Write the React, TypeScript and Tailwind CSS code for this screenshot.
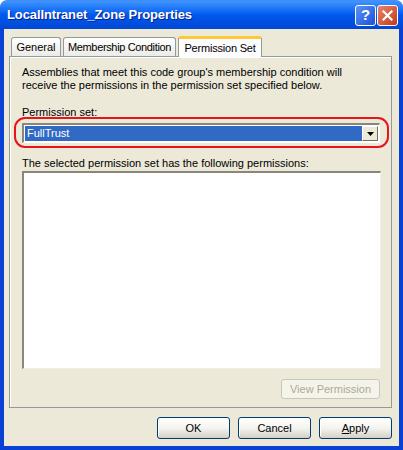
import React from 'react';

const font = { fontFamily: '"Liberation Sans", Arial, sans-serif' };

function XpButton({ children, disabled }: { children: React.ReactNode; disabled?: boolean }) {
  if (disabled) {
    return (
      <div className="w-[99px] h-[20px] flex items-center justify-center rounded-[3px] border border-[#C9C7BA] bg-[#F5F4EA] text-[11px] text-[#ACA899]">
        {children}
      </div>
    );
  }
  return (
    <div className="w-[73px] h-[22px] flex items-center justify-center rounded-[3px] border border-[#003C74] bg-gradient-to-b from-[#FFFFFF] via-[#F4F4F0] to-[#D6D0C5] text-[11px] text-black shadow-[inset_0_-1px_0_#D6D0C5,inset_1px_0_0_#FFFFFF]">
      {children}
    </div>
  );
}

export default function App() {
  return (
    <div className="w-[403px] h-[450px] bg-white flex flex-col" style={font}>
      {/* title bar */}
      <div className="h-[29px] rounded-t-[7px] bg-gradient-to-b from-[#3D95FF] via-[#0058EE] to-[#0247D3] flex items-center pl-[7px] pr-[5px] border-t border-[#4A8CF7]">
        <span className="text-white font-bold text-[13px] tracking-[-0.1px] [text-shadow:1px_1px_0_#0A1E8C]">
          LocalIntranet_Zone Properties
        </span>
        <div className="ml-auto flex gap-[1px]">
          <div className="w-[21px] h-[21px] rounded-[3px] border border-white bg-gradient-to-br from-[#5C93F5] to-[#1C4FD9] flex items-center justify-center text-white font-bold text-[15px]">
            ?
          </div>
          <div className="w-[21px] h-[21px] rounded-[3px] border border-white bg-gradient-to-br from-[#E8836A] to-[#C2371A] flex items-center justify-center">
            <svg width="11" height="11" viewBox="0 0 11 11">
              <path d="M1.5 1.5 L9.5 9.5 M9.5 1.5 L1.5 9.5" stroke="white" strokeWidth="2.2" strokeLinecap="square" />
            </svg>
          </div>
        </div>
      </div>

      {/* body */}
      <div className="flex-1 flex flex-col bg-[#ECE9D8] border-x-4 border-b-4 border-[#0841D4] pl-[5px] pr-[7px] text-[11px] text-black">
        {/* tabs */}
        <div className="flex items-end h-[27px] pl-[2px] gap-[2px]">
          <div className="w-[50px] h-[19px] flex items-center justify-center border border-b-0 border-[#919B9C] rounded-t-[3px] bg-gradient-to-b from-white to-[#ECEBE6]">
            General
          </div>
          <div className="w-[113px] h-[19px] flex items-center justify-center border border-b-0 border-[#919B9C] rounded-t-[3px] bg-gradient-to-b from-white to-[#ECEBE6] tracking-[-0.35px]">
            Membership Condition
          </div>
          <div className="w-[84px] h-[21px] flex items-center justify-center border border-b-0 border-[#919B9C] border-t-[3px] border-t-[#FFC83C] rounded-t-[3px] bg-[#FCFCFE] -mb-[1px] relative z-10 tracking-[-0.2px]">
            Permission Set
          </div>
        </div>

        {/* panel */}
        <div className="h-[352px] relative border border-[#919B9C] bg-[#ECE9D8] shadow-[inset_1px_1px_0_#FFFFFF] pl-[12px] pr-[10px] pt-[9px] leading-[13px]">
          <p>Assemblies that meet this code group's membership condition will</p>
          <p>receive the permissions in the permission set specified below.</p>

          <p className="mt-[14px]">Permission set:</p>
          <div className="mt-[4px] h-[20px] flex border-t-2 border-l-2 border-b border-r border-t-[#8A877A] border-l-[#8A877A] border-b-white border-r-white bg-white p-[1px] w-[358px]">
            <div className="flex-1 bg-[#316AC5] text-white flex items-center pl-[2px]">FullTrust</div>
            <div className="w-[16px] bg-[#ECE9D8] border-t border-l border-white border-b border-r border-b-[#716F64] border-r-[#716F64] flex items-center justify-center">
              <svg width="7" height="4" viewBox="0 0 7 4">
                <path d="M0 0 H7 L3.5 4 Z" fill="black" />
              </svg>
            </div>
          </div>
          {/* red highlight ring */}
          <div className="absolute left-[4px] top-[60px] w-[375px] h-[31px] rounded-[11px] border-2 border-[#E8141A] pointer-events-none" />

          <p className="mt-[14px]">The selected permission set has the following permissions:</p>
          <div className="mt-[1px] h-[198px] w-[359px] bg-white border-t-2 border-l-2 border-b border-r border-t-[#8A877A] border-l-[#8A877A] border-b-[#F1EFE2] border-r-[#F1EFE2]" />

          <div className="flex justify-end mt-[10px] pr-[1px]">
            <XpButton disabled>View Permission</XpButton>
          </div>
        </div>

        {/* bottom buttons */}
        <div className="flex justify-end gap-[8px] mt-[9px] pr-[0px]">
          <XpButton>OK</XpButton>
          <XpButton>Cancel</XpButton>
          <XpButton>
            <span>
              <span className="underline">A</span>pply
            </span>
          </XpButton>
        </div>
      </div>
    </div>
  );
}
